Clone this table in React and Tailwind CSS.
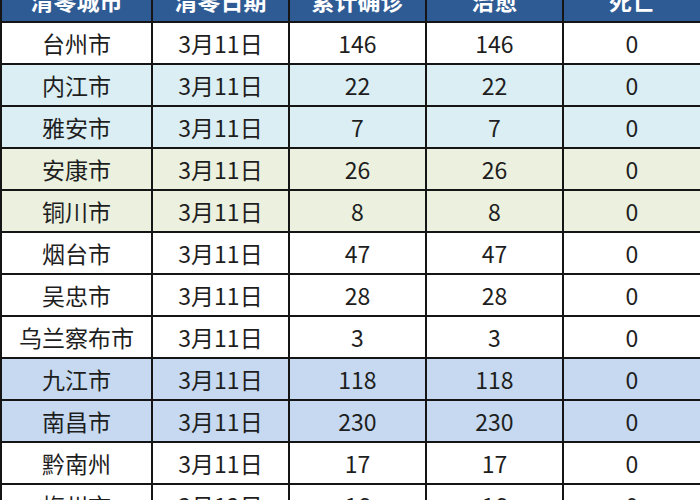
const rows = [
  ['台州市', '3月11日', '146', '146', '0', 'bg-white'],
  ['内江市', '3月11日', '22', '22', '0', 'bg-[#dbeef3]'],
  ['雅安市', '3月11日', '7', '7', '0', 'bg-[#dbeef3]'],
  ['安康市', '3月11日', '26', '26', '0', 'bg-[#ebf1de]'],
  ['铜川市', '3月11日', '8', '8', '0', 'bg-[#ebf1de]'],
  ['烟台市', '3月11日', '47', '47', '0', 'bg-white'],
  ['吴忠市', '3月11日', '28', '28', '0', 'bg-white'],
  ['乌兰察布市', '3月11日', '3', '3', '0', 'bg-white'],
  ['九江市', '3月11日', '118', '118', '0', 'bg-[#c6d9f0]'],
  ['南昌市', '3月11日', '230', '230', '0', 'bg-[#c6d9f0]'],
  ['黔南州', '3月11日', '17', '17', '0', 'bg-white'],
  ['梅州市', '3月12日', '16', '16', '0', 'bg-white'],
]

const heads = ['清零城市', '清零日期', '累计确诊', '治愈', '死亡']

export default function App() {
  return (
    <div className="w-[700px] h-[500px] overflow-hidden bg-white"
         style={{ fontFamily: '"Noto Sans CJK SC", "Liberation Sans", sans-serif' }}>
      <table className="w-[700px] -mt-[23px] border-collapse table-fixed">
        <colgroup>
          <col className="w-[151px]" />
          <col className="w-[137px]" />
          <col className="w-[137px]" />
          <col className="w-[137px]" />
          <col className="w-[138px]" />
        </colgroup>
        <thead>
          <tr className="h-[44px] bg-[#2f5b95]">
            {heads.map(h => (
              <th key={h} className="border-2 border-[#151515] text-white font-bold text-[23px] leading-none text-center">
                {h}
              </th>
            ))}
          </tr>
        </thead>
        <tbody>
          {rows.map(r => (
            <tr key={r[0]} className={`h-[42px] ${r[5]}`}>
              {r.slice(0, 5).map((c, i) => (
                <td key={i} className="border-2 border-[#151515] text-center text-[23px] leading-none text-[#1e1e1e] p-0">
                  {c}
                </td>
              ))}
            </tr>
          ))}
        </tbody>
      </table>
    </div>
  )
}
